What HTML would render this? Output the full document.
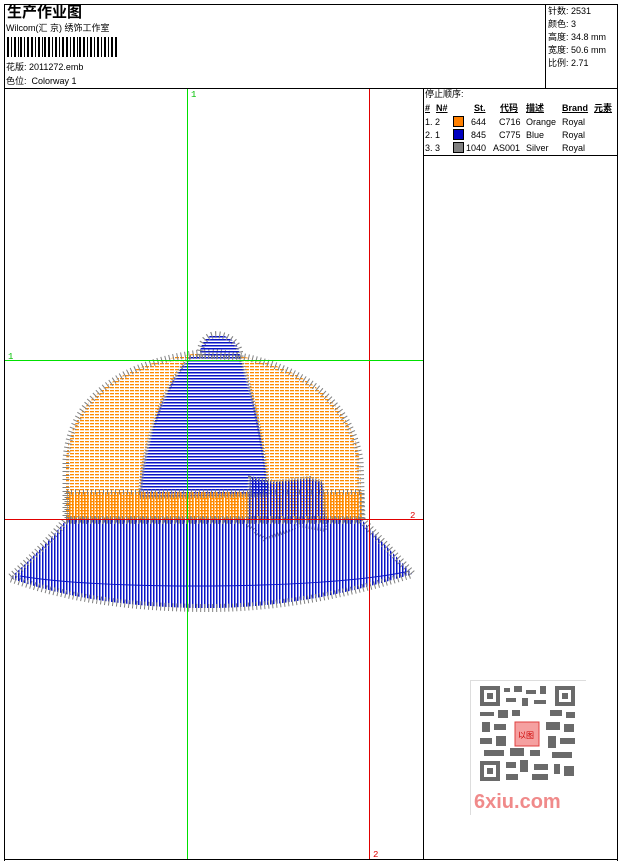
<!DOCTYPE html>
<html><head><meta charset="utf-8"><style>
body{margin:0;width:620px;height:861px;background:#fff;position:relative;overflow:hidden;font-family:"Liberation Sans","Noto Sans CJK SC",sans-serif;font-size:9px;color:#000}
.a{position:absolute}
.b{position:absolute;background:#000}
.t{position:absolute;white-space:nowrap;line-height:1}
</style></head><body>
<div class="b" style="left:4px;top:4px;width:614px;height:1px"></div>
<div class="b" style="left:4px;top:4px;width:1px;height:857px"></div>
<div class="b" style="left:617px;top:4px;width:1px;height:857px"></div>
<div class="b" style="left:4px;top:859px;width:614px;height:1px"></div>
<div class="b" style="left:4px;top:88px;width:614px;height:1px"></div>
<div class="b" style="left:545px;top:4px;width:1px;height:84px"></div>
<div class="b" style="left:423px;top:88px;width:1px;height:772px"></div>
<div class="b" style="left:423px;top:155px;width:195px;height:1px"></div>

<div class="t" style="left:7px;top:5px;font-size:15px;font-weight:bold">生产作业图</div>
<div class="t" style="left:6px;top:24px;font-size:9px">Wilcom(汇 京) 绣饰工作室</div>
<svg class="a" style="left:7px;top:37px" width="112" height="20">
<g fill="#000">
<rect x="0" y="0" width="2" height="20"/><rect x="4" y="0" width="1" height="20"/><rect x="7" y="0" width="2" height="20"/><rect x="11" y="0" width="1" height="20"/><rect x="13" y="0" width="2" height="20"/><rect x="17" y="0" width="1" height="20"/><rect x="20" y="0" width="2" height="20"/><rect x="24" y="0" width="2" height="20"/><rect x="28" y="0" width="1" height="20"/><rect x="31" y="0" width="2" height="20"/><rect x="35" y="0" width="1" height="20"/><rect x="37" y="0" width="2" height="20"/><rect x="41" y="0" width="2" height="20"/><rect x="45" y="0" width="1" height="20"/><rect x="48" y="0" width="2" height="20"/><rect x="52" y="0" width="1" height="20"/><rect x="55" y="0" width="2" height="20"/><rect x="59" y="0" width="2" height="20"/><rect x="63" y="0" width="1" height="20"/><rect x="66" y="0" width="2" height="20"/><rect x="70" y="0" width="1" height="20"/><rect x="72" y="0" width="2" height="20"/><rect x="76" y="0" width="2" height="20"/><rect x="80" y="0" width="1" height="20"/><rect x="83" y="0" width="2" height="20"/><rect x="87" y="0" width="1" height="20"/><rect x="90" y="0" width="2" height="20"/><rect x="94" y="0" width="1" height="20"/><rect x="97" y="0" width="2" height="20"/><rect x="101" y="0" width="1" height="20"/><rect x="104" y="0" width="2" height="20"/><rect x="108" y="0" width="2" height="20"/>
</g></svg>
<div class="t" style="left:6px;top:63px">花版: 2011272.emb</div>
<div class="t" style="left:6px;top:77px">色位:&nbsp; Colorway 1</div>

<div class="t" style="left:548px;top:7px">针数: 2531</div>
<div class="t" style="left:548px;top:20px">颜色: 3</div>
<div class="t" style="left:548px;top:33px">高度: 34.8 mm</div>
<div class="t" style="left:548px;top:46px">宽度: 50.6 mm</div>
<div class="t" style="left:548px;top:59px">比例: 2.71</div>

<div class="t" style="left:425px;top:90px">停止顺序:</div>
<div class="t" style="left:425px;top:104px;font-weight:bold;text-decoration:underline">#</div>
<div class="t" style="left:436px;top:104px;font-weight:bold;text-decoration:underline">N#</div>
<div class="t" style="left:474px;top:104px;font-weight:bold;text-decoration:underline">St.</div>
<div class="t" style="left:500px;top:104px;font-weight:bold;text-decoration:underline">代码</div>
<div class="t" style="left:526px;top:104px;font-weight:bold;text-decoration:underline">描述</div>
<div class="t" style="left:562px;top:104px;font-weight:bold;text-decoration:underline">Brand</div>
<div class="t" style="left:594px;top:104px;font-weight:bold;text-decoration:underline">元素</div>
<div class="t" style="left:425px;top:118px">1. 2</div><div class="a" style="left:453px;top:116px;width:9px;height:9px;background:#ff8000;border:1px solid #000"></div><div class="t" style="left:471px;top:118px">644</div><div class="t" style="left:499px;top:118px">C716</div><div class="t" style="left:526px;top:118px">Orange</div><div class="t" style="left:562px;top:118px">Royal</div>
<div class="t" style="left:425px;top:131px">2. 1</div><div class="a" style="left:453px;top:129px;width:9px;height:9px;background:#0000c0;border:1px solid #000"></div><div class="t" style="left:471px;top:131px">845</div><div class="t" style="left:499px;top:131px">C775</div><div class="t" style="left:526px;top:131px">Blue</div><div class="t" style="left:562px;top:131px">Royal</div>
<div class="t" style="left:425px;top:144px">3. 3</div><div class="a" style="left:453px;top:142px;width:9px;height:9px;background:#808080;border:1px solid #000"></div><div class="t" style="left:466px;top:144px">1040</div><div class="t" style="left:493px;top:144px">AS001</div><div class="t" style="left:526px;top:144px">Silver</div><div class="t" style="left:562px;top:144px">Royal</div>

<svg class="a" style="left:5px;top:89px" width="418" height="770">
<defs>
<pattern id="ho" width="5" height="3" patternUnits="userSpaceOnUse"><rect width="4" height="1.3" fill="#ff8a00"/></pattern>
<pattern id="hb" width="6" height="3" patternUnits="userSpaceOnUse"><rect width="6" height="1.5" fill="#0a14c8"/></pattern>
<pattern id="vb" width="3" height="6" patternUnits="userSpaceOnUse"><rect width="1.5" height="6" fill="#0a14c8"/></pattern>
<pattern id="vo" width="3" height="6" patternUnits="userSpaceOnUse"><rect width="1.6" height="6" fill="#ff8a00"/></pattern>
</defs>
<g transform="translate(-5,-89)">
<!-- crown orange -->
<path d="M66 520 L66 460 C70 400 120 360 210 352 C300 360 350 400 360 460 L362 520 Z" fill="url(#ho)" stroke="#808080" stroke-width="7" stroke-dasharray="1 3"/>
<!-- blue panel -->
<path d="M190 357 L240 357 C255 400 265 450 268 495 L140 497 C142 450 160 390 190 357 Z" fill="url(#hb)" stroke="#808080" stroke-width="4" stroke-dasharray="1 2"/>
<path d="M200 355 C200 340 210 333 220 335 C232 337 240 345 240 357 Z" fill="url(#hb)" stroke="#808080" stroke-width="7" stroke-dasharray="1 3"/>
<!-- band -->
<rect x="67" y="492" width="295" height="28" fill="url(#vo)" stroke="#808080" stroke-width="5" stroke-dasharray="1 3"/>
<path d="M250 478 L275 482 L310 478 L322 482 L326 530 L300 525 L265 540 L248 525 Z" fill="url(#vb)" stroke="#808080" stroke-width="4" stroke-dasharray="1 2"/>
<!-- brim -->
<path d="M66 520 L362 520 C380 540 400 560 412 574 C330 600 260 608 210 608 C140 608 70 600 10 578 C30 560 50 540 66 520 Z" fill="url(#vb)" stroke="#808080" stroke-width="8" stroke-dasharray="1 3"/>
<path d="M20 576 C100 590 320 590 405 572" fill="none" stroke="#0a14c8" stroke-width="1"/>
</g>
<line x1="182.5" y1="0" x2="182.5" y2="770" stroke="#00e000" stroke-width="1"/>
<line x1="364.5" y1="0" x2="364.5" y2="770" stroke="#e00000" stroke-width="1"/>
<line x1="0" y1="271.5" x2="418" y2="271.5" stroke="#00e000" stroke-width="1"/>
<line x1="0" y1="430.5" x2="418" y2="430.5" stroke="#e00000" stroke-width="1"/>
<text x="186" y="8" font-size="9" fill="#00c000" font-family="Liberation Mono">1</text>
<text x="3" y="270" font-size="9" fill="#00c000" font-family="Liberation Mono">1</text>
<text x="405" y="429" font-size="9" fill="#e00000" font-family="Liberation Mono">2</text>
<text x="368" y="768" font-size="9" fill="#e00000" font-family="Liberation Mono">2</text>
</svg>

<!-- QR -->
<div class="a" style="left:470px;top:680px;width:115px;height:134px;border-left:1px solid #ddd;border-top:1px solid #ddd"></div>
<svg class="a" style="left:480px;top:686px" width="95" height="95">
<g fill="#6a6a6a">
<rect x="0" y="0" width="20" height="20"/><rect x="4" y="4" width="12" height="12" fill="#fff"/><rect x="7" y="7" width="6" height="6"/>
<rect x="75" y="0" width="20" height="20"/><rect x="79" y="4" width="12" height="12" fill="#fff"/><rect x="82" y="7" width="6" height="6"/>
<rect x="0" y="75" width="20" height="20"/><rect x="4" y="79" width="12" height="12" fill="#fff"/><rect x="7" y="82" width="6" height="6"/>
<rect x="24" y="2" width="6" height="4"/><rect x="34" y="0" width="8" height="6"/><rect x="46" y="4" width="10" height="4"/><rect x="60" y="0" width="6" height="8"/>
<rect x="26" y="12" width="10" height="4"/><rect x="42" y="12" width="6" height="8"/><rect x="54" y="14" width="12" height="4"/>
<rect x="0" y="26" width="14" height="4"/><rect x="18" y="24" width="10" height="8"/><rect x="32" y="24" width="8" height="6"/><rect x="70" y="24" width="12" height="6"/><rect x="86" y="26" width="9" height="6"/>
<rect x="2" y="36" width="8" height="10"/><rect x="14" y="38" width="12" height="6"/><rect x="66" y="36" width="14" height="8"/><rect x="84" y="38" width="10" height="8"/>
<rect x="0" y="52" width="12" height="6"/><rect x="16" y="50" width="10" height="10"/><rect x="68" y="50" width="8" height="12"/><rect x="80" y="52" width="15" height="6"/>
<rect x="4" y="64" width="20" height="6"/><rect x="30" y="62" width="14" height="8"/><rect x="50" y="64" width="10" height="6"/><rect x="72" y="66" width="20" height="6"/>
<rect x="26" y="76" width="10" height="6"/><rect x="40" y="74" width="8" height="12"/><rect x="54" y="78" width="14" height="6"/><rect x="74" y="78" width="6" height="10"/><rect x="84" y="80" width="10" height="10"/>
<rect x="26" y="88" width="12" height="6"/><rect x="52" y="88" width="16" height="6"/>
</g>
<rect x="35" y="36" width="24" height="24" fill="#f5a0a0" stroke="#e04040"/>
<text x="38" y="52" font-size="8" fill="#c00" font-family="Noto Sans CJK SC,sans-serif">以图</text>
</svg>
<div class="t" style="left:474px;top:792px;font-size:20px;font-weight:bold;color:#f08a8a">6xiu.com</div>
</body></html>
